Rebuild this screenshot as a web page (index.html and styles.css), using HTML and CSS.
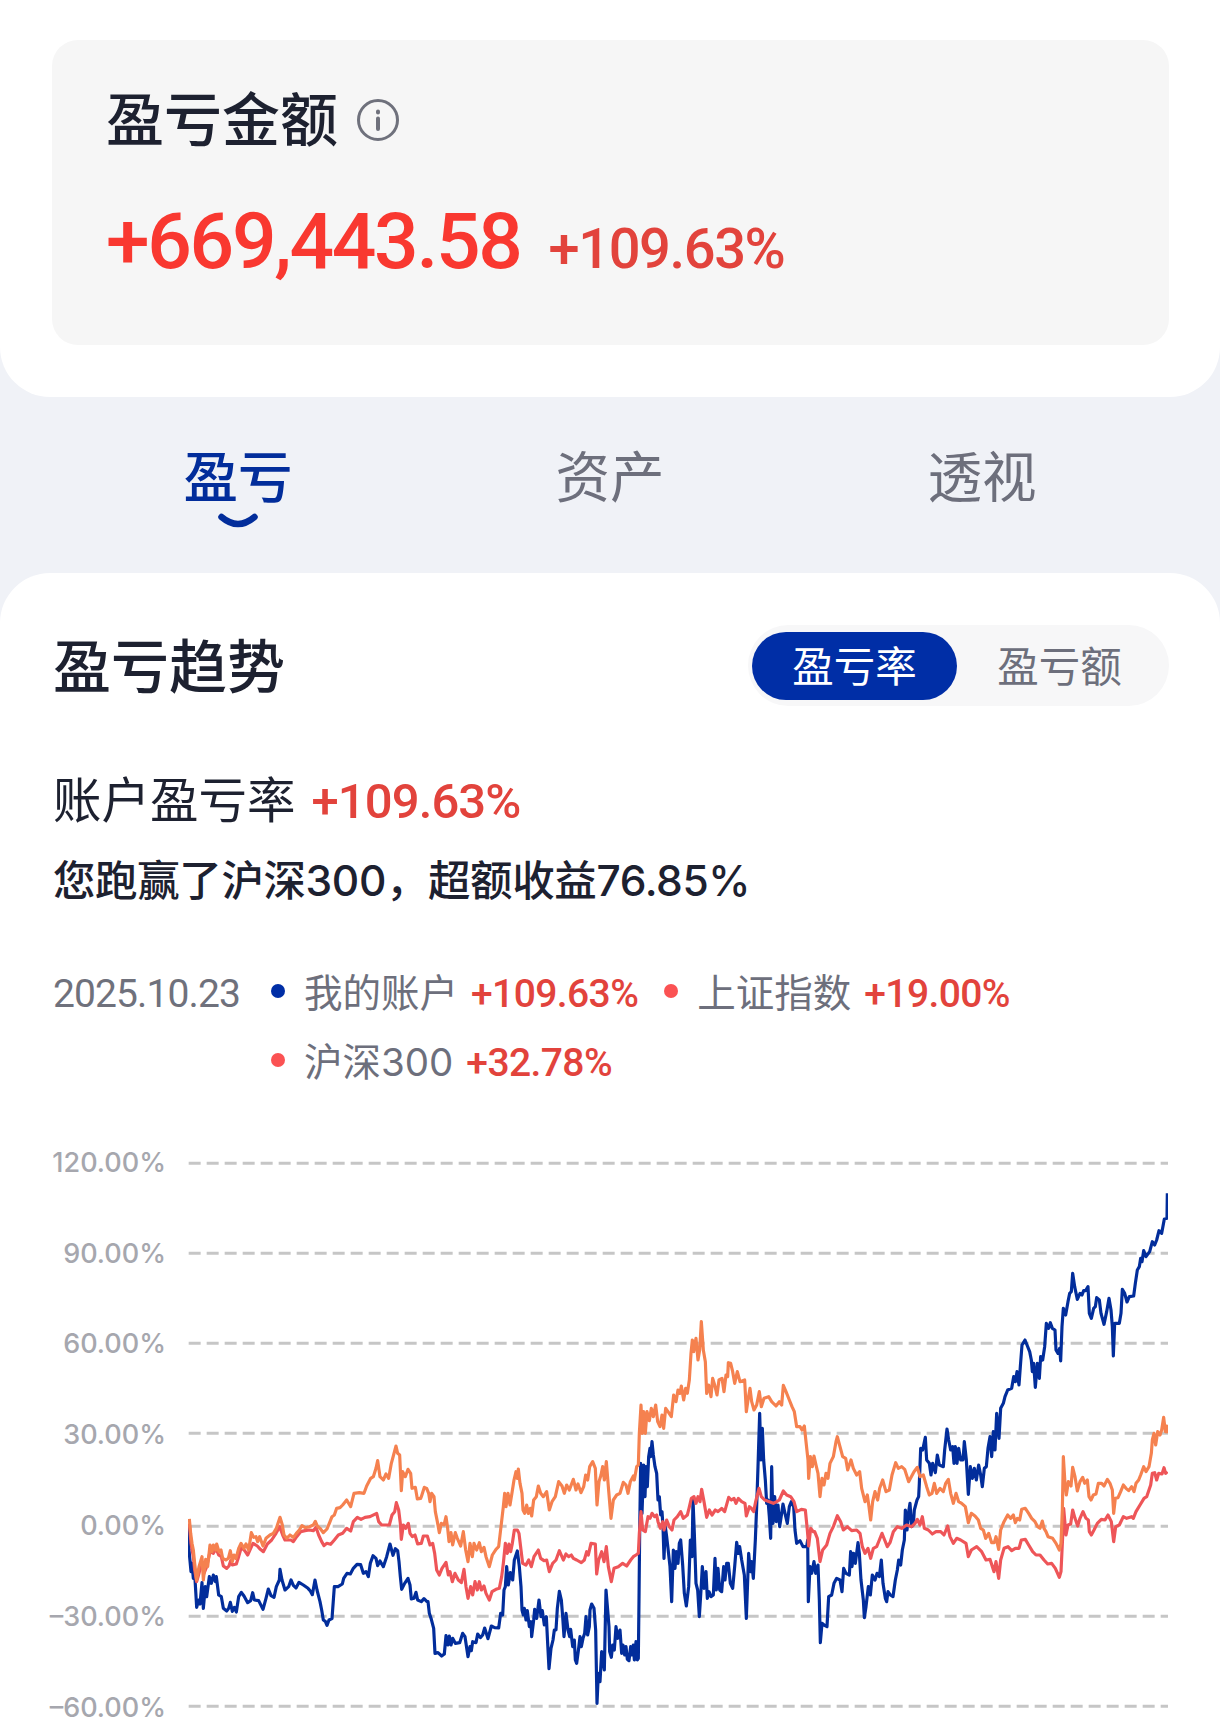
FILE: index.html
```html
<!DOCTYPE html>
<html lang="zh-CN">

<head>
	<meta charset="UTF-8">
	<meta name="viewport" content="width=device-width, initial-scale=1.0">
	<title>盈亏</title>
	<link rel="stylesheet" href="styles.css">
</head>

<body>
	<section class="summary">
		<div class="card">
			<div class="cardTitle">
				<h1>盈亏金额</h1>
				<svg class="info" viewBox="0 0 42 42">
					<circle cx="21" cy="21" r="19.5" />
					<path d="M21 19.5V30M21 12.5V13.5" />
				</svg>
			</div>
			<div class="cardMoney">
				<span class="num amount">+669,443.58</span>
				<span class="num percent">+109.63%</span>
			</div>
		</div>
	</section>

	<nav class="tabs">
		<a class="tab active">盈亏
			<svg class="smile" viewBox="0 0 40 16">
				<path d="M3.5 4Q20 18 36.5 4" />
			</svg>
		</a>
		<a class="tab">资产</a>
		<a class="tab">透视</a>
	</nav>

	<section class="trend">
		<div class="trendHead">
			<h2>盈亏趋势</h2>
			<div class="switch">
				<button class="on">盈亏率</button>
				<button>盈亏额</button>
			</div>
		</div>

		<p class="rate"><span class="rateName">账户盈亏率</span><span class="num rateValue">+109.63%</span></p>
		<p class="beat">您跑赢了沪深300，超额收益76.85%</p>

		<div class="legend">
			<span class="num date">2025.10.23</span>
			<div class="items">
				<div class="item"><i class="dot blue"></i><span class="name">我的账户</span><span class="num value">+109.63%</span></div>
				<div class="item"><i class="dot"></i><span class="name">上证指数</span><span class="num value">+19.00%</span></div>
				<div class="item"><i class="dot"></i><span class="name">沪深300</span><span class="num value">+32.78%</span></div>
			</div>
		</div>

		<div class="chart">
			<div class="axis">
				<span>120.00%</span>
				<span>90.00%</span>
				<span>60.00%</span>
				<span>30.00%</span>
				<span>0.00%</span>
				<span>–30.00%</span>
				<span>–60.00%</span>
			</div>
			<svg class="plot" viewBox="24 -852 2940 1818">
				<path class="grid" d="M26 -710H2964M26 -440H2964M26 -170H2964M26 100H2964M26 379H2964M26 649H2964M26 919H2964" />
				<path class="line account" id="account" />
				<path class="line shanghai" id="shanghai" />
				<path class="line hs300" id="hs300" />
			</svg>
		</div>
	</section>

	<script src="chart.js"></script>
</body>

</html>
```
FILE: styles.css
```css
* {
	box-sizing: border-box;
}

body {
	margin: 0;
	height: 1722px;
	overflow: hidden;
	background: #f0f2f7;
	color: #1d2130;
	font-family: "Noto Sans CJK SC", sans-serif;
}

h1,
h2,
p {
	margin: 0;
	font-weight: 500;
}

.num {
	font-family: Roboto, sans-serif;
	font-weight: 500;
	color: #e2433c;
	white-space: nowrap;
}

.summary {
	height: 397px;
	padding: 40px 51px 0 52px;
	background: #fff;
	border-radius: 0 0 50px 50px;
}

.card {
	height: 305px;
	padding: 41px 54px 0;
	background: #f6f6f6;
	border-radius: 26px;
}

.cardTitle {
	display: flex;
	align-items: center;
	gap: 19px;
	height: 70px;
}

.cardTitle h1 {
	font-size: 58px;
	line-height: 70px;
}

.info {
	width: 42px;
	height: 42px;
	margin-top: 7px;
	fill: none;
	stroke: #6f717c;
	stroke-width: 3;
}

.info path {
	stroke-width: 4;
	stroke-linecap: round;
}

.cardMoney {
	display: flex;
	align-items: baseline;
	gap: 28px;
	margin-top: 44px;
	line-height: 92px;
}

.amount {
	font-size: 78.5px;
	letter-spacing: -2.3px;
	color: #f93830;
}

.percent {
	font-size: 56px;
	letter-spacing: -1.4px;
}

.tabs {
	display: flex;
	height: 176px;
	padding: 0 52px;
}

.tab {
	display: flex;
	flex: 1;
	flex-direction: column;
	align-items: center;
	padding-top: 41px;
	font-size: 54.5px;
	line-height: 71px;
	color: #6d6f7c;
}

.tab.active {
	color: #022d9b;
	font-weight: 500;
}

.smile {
	width: 40px;
	height: 16px;
	margin-top: 4px;
	fill: none;
	stroke: #022d9b;
	stroke-width: 6.5;
	stroke-linecap: round;
}

.trend {
	height: 1149px;
	padding: 52px 51px 0 53px;
	background: #fff;
	border-radius: 50px 50px 0 0;
}

.trendHead {
	display: flex;
	align-items: center;
	justify-content: space-between;
	height: 81px;
}

.trendHead h2 {
	height: 85px;
	font-size: 58px;
	line-height: 81px;
}

.switch {
	display: flex;
	width: 421px;
	height: 81px;
	padding: 7px 4px;
	background: #f7f7f8;
	border-radius: 41px;
}

.switch button {
	width: 205px;
	height: 68px;
	padding: 0 0 4px;
	border: 0;
	border-radius: 34px;
	background: none;
	color: #6d6f7c;
	font-family: inherit;
	font-size: 41.5px;
	line-height: 60px;
}

.switch .on {
	background: #002ea6;
	color: #fff;
}

.rate {
	display: flex;
	align-items: center;
	gap: 16px;
	height: 80px;
	margin-top: 51px;
}

.rateName {
	font-size: 48.5px;
	font-weight: 400;
}

.rateValue {
	padding-top: 8px;
	font-size: 49px;
	letter-spacing: -0.9px;
}

.beat {
	height: 80px;
	margin-top: 4px;
	font-family: Inter, "Noto Sans CJK SC", sans-serif;
	font-size: 42.5px;
	letter-spacing: -0.4px;
	line-height: 80px;
	white-space: nowrap;
}

.legend {
	display: flex;
	margin-top: 37px;
	line-height: 69px;
}

.date {
	width: 218px;
	padding-top: 2px;
	font-size: 39px;
	font-weight: 400;
	letter-spacing: -0.9px;
	color: #6f717c;
}

.items {
	display: flex;
	flex: 1;
	flex-wrap: wrap;
	column-gap: 26px;
}

.item {
	display: flex;
	align-items: center;
	height: 69px;
}

.dot {
	width: 14px;
	height: 14px;
	margin: 0 19px 3px 0;
	border-radius: 50%;
	background: #fb5253;
}

.dot.blue {
	background: #002ea6;
}

.name {
	padding-top: 1px;
	margin-right: 13px;
	font-family: Inter, "Noto Sans CJK SC", sans-serif;
	font-size: 38.5px;
	color: #6d6f7c;
}

.value {
	padding-top: 4px;
	font-size: 39px;
	letter-spacing: -0.6px;
}

.chart {
	display: flex;
	gap: 22px;
	height: 606px;
	margin-top: 20px;
}

.axis {
	width: 113px;
	padding-top: 1px;
	font-family: Inter, sans-serif;
	font-size: 27px;
	font-weight: 500;
	color: #a6a7ae;
}

.axis span {
	display: flex;
	align-items: center;
	justify-content: flex-end;
	height: 90.8px;
	white-space: nowrap;
}

.plot {
	width: 980px;
	height: 606px;
	fill: none;
}

.grid {
	stroke: #c6c6c6;
	stroke-width: 9;
	stroke-dasharray: 36 18;
}

.line {
	stroke-width: 9.5;
	stroke-linejoin: round;
}

.account {
	stroke: #022d9b;
}

.shanghai {
	stroke: #ee5558;
}

.hs300 {
	stroke: #f5814f;
}
```
FILE: chart.js
```js
// each series is a list of chunks, the points of a chunk count from its own x / y
const series = {
	account: [
		{ x: 0, y: 0, points: '26,375 27,450 33,515 36,490 40,535 44,520 50,622 56,600 60,612 66,548 70,625 76,560 80,590 88,530 94,550 100,525 106,545 109,530 116,585 124,590 130,625 140,633 146,625 151,607 157,634 163,622 169,636 176,590 184,577 192,588 203,608 212,602 218,578 223,600 236,602 249,628 258,595 265,567 273,587 282,592 289,560 298,540 300,508 306,540 315,570 326,560 333,540 340,556 348,564 357,547 370,555 384,565 391,573 397,584 405,540 411,570 420,605 425,630 430,660 436,664 441,676 447,660 456,656 463,560 474,560 487,552 491,535 501,520 511,522 520,505 531,493 542,494 550,520 558,515 565,530 571,490 579,467 588,475 593,497 600,483 610,500 620,470 630,432 639,466 646,446 653,452 657,485 661,530 665,568 674,550 684,535 690,555 694,597 702,595 708,577 713,600 724,605 732,596 741,605' },
		{ x: 720, y: 0, points: '24,605 28,640 34,658 41,685 45,760 54,758 65,768 73,762 78,707 84,735 88,708 93,735 98,715 106,730 119,728 128,700 135,710 144,770 150,740 154,752 158,725 168,728 173,702 181,713 188,705 194,684 204,716 214,678 224,683 236,684 242,640 248,645 252,570 256,560 260,500 265,555 271,518 278,540 283,480 292,453 298,500 303,560 306,630 310,645 313,625 318,660 322,632 328,680 333,665 335,710 341,660 344,628 350,655 357,600 363,650 367,632 373,675 379,650 383,730 387,806 393,745 399,720 403,690 408,690 412,625 418,574 424,600 428,650 432,710 438,640 444,690 449,710 452,688 458,740 463,720 466,780 470,790 476,745 480,710 484,740 489,715 494,700 498,650 503,705 508,680 510,630 515,612 522,625 527,690 531,910 535,820 540,845 545,755 553,810 558,570 563,630 567,680 569,755 574,772 578,735 583,750 588,680 593,715 600,690 605,760 609,735 614,765 618,740 622,778 627,782 632,740 636,765 640,735 643,780 648,725 652,780 655,775 657,600 659,400' },
		{ x: 1350, y: -300, points: '32,490 36,640 41,495 45,590 48,500 52,560 56,470 60,445 62,470 66,425 70,465 75,500 80,520 84,600 88,590 92,645 96,635 99,680 102,775 106,680 110,710 114,745 120,800 125,905 130,750 135,805 139,755 144,790 148,730 152,720 158,795 163,880 169,918 176,860 181,720 186,770 189,600 193,700 198,850 203,870 208,950 213,870 217,800 222,865 228,815 232,895 237,875 243,890 250,885 255,775 259,870 264,805 269,870 275,875 281,800 285,840 290,790 295,790 301,850 308,865 314,800 320,727 325,760 329,740 335,780 343,825 349,955 356,760 361,815 365,785 370,835 376,720 380,620 384,500 389,340 393,480 397,385 401,480 406,540 410,610 414,600 418,650 422,715 425,500 429,670 434,590 439,665 444,615 449,680 455,640 459,612 465,640 472,670 478,620 484,605 491,620 495,690 500,730 510,722 519,740 530,740 533,720 535,905 540,800 545,820 552,785 557,820 564,795 568,900' },
		{ x: 1890, y: -120, points: '31,848 36,790 42,795 51,800 56,710 65,705 72,670 80,655 90,660 96,695 101,625 108,640 118,645 122,575 126,620 131,580 136,610 144,548 148,580 153,660 160,720 163,773 168,740 175,680 181,705 187,645 195,660 201,640 208,650 214,600 219,670 226,715 230,725 234,695 241,705 249,710 256,660 262,630 266,600 272,615 277,570 283,540 286,450 291,510 296,455 300,430 305,500 310,495 313,450 321,420 326,410 328,370 332,265 338,270 346,232 350,300 358,310 363,345 368,310 376,338 382,285 388,315 400,320 404,270 411,207 416,240 422,270 428,260 432,310 436,260 441,310 446,265 452,300 459,300 463,245 469,300 475,403 481,320 487,355 493,325 499,360 506,315 512,345 517,380 523,325 529,320 534,265 540,230 545,290 550,215 555,270 560,160 567,235' },
		{ x: 2400, y: -690, points: '62,715 70,700 75,680 83,660 95,655 101,620 106,635 111,605 117,645 121,590 126,525 135,510 141,525 149,545 154,570 157,605 161,580 166,652 172,580 178,625 182,560 188,570 194,530 199,460 206,475 211,458 217,475 225,480 228,540 234,550 239,535 242,573 246,470 250,415 257,435 264,395 269,370 274,365 278,310 284,350 292,388 300,370 306,375 311,362 317,362 324,350 328,430 334,445 341,415 346,410 350,383 358,390 363,430 372,463 380,425 387,385 393,420 397,470 400,558 404,460 411,460 418,460 423,430 427,358 434,370 441,396 448,380 461,378 466,340 472,300 478,290 482,265 486,275 491,242 498,260 509,245 517,215 524,225 530,210 537,182 545,190 553,147 561,145 562,70' }
	],
	shanghai: [
		{ x: 0, y: 0, points: '28,370 33,430 40,470 44,510 50,545 57,520 66,485 72,520 80,500 90,455 100,460 108,445 116,465 124,470 130,498 140,505 147,498 152,482 157,495 169,492 176,470 184,442 194,452 203,465 212,445 219,430 232,438 241,448 250,455 262,432 275,420 288,400 299,380 308,405 315,420 325,420 333,420 340,425 350,410 362,395 375,392 388,390 400,392 408,382 416,405 425,425 432,437 440,430 452,433 463,420 475,405 488,400 500,385 512,393 520,365 532,352 543,358 555,352 570,350 590,340 596,365 605,375 628,375 636,345 644,335 649,308 656,330 661,370 664,418 670,375 677,385 685,370 690,400 697,410 705,405 713,432 722,430' },
		{ x: 720, y: 0, points: '4,430 10,408 22,408 30,435 38,430 44,460 50,510 58,525 66,505 78,487 85,525 90,515 97,545 105,520 115,540 124,548 132,508 138,560 144,595 152,560 158,585 165,545 172,570 178,545 184,570 192,558 198,580 208,600 216,575 228,568 238,565 245,530 250,490 256,430 262,460 267,432 272,455 277,430 283,390 292,390 297,400 303,450 308,490 318,495 326,480 334,500 342,470 355,450 362,475 372,482 380,480 388,515 398,490 408,480 418,452 430,480 438,462 446,470 454,465 460,475 470,480 484,488 493,480 500,455 505,465 513,430 526,432 530,522 536,480 545,455 552,485 559,440 565,500 574,545 582,505 595,500 608,490 620,498 632,480 640,470 648,465 655,460 658,400' },
		{ x: 1350, y: -300, points: '33,635 38,690 46,695 54,650 60,655 66,640 74,650 80,645 84,665 91,685 98,665 102,690 110,660 118,680 126,690 132,660 142,650 152,635 160,655 172,645 177,625 184,595 192,590 198,610 204,590 210,605 215,568 222,605 230,652 238,630 246,645 256,630 264,635 275,625 284,635 296,592 304,600 312,595 318,610 325,595 335,605 345,610 349,648 358,620 364,625 371,635 377,605 387,565 394,590 404,600 418,605 430,610 440,605 448,600 460,573 470,585 482,590 492,605 500,635 514,628 526,630 532,690 536,738 542,685 550,695' },
		{ x: 1890, y: -120, points: '14,515 22,535 30,605 38,570 50,555 60,520 70,500 82,467 92,485 100,510 112,500 125,512 140,510 150,520 157,560 165,580 174,565 182,595 190,565 200,560 208,540 216,520 224,540 232,560 240,548 250,515 262,500 275,505 290,495 305,500 315,490 322,478 330,495 337,470 343,505 355,510 367,522 378,515 392,515 402,525 413,498 420,530 430,550 440,535 452,540 468,550 475,590 484,570 500,560 515,575 528,600 540,598 552,635 558,605 566,655' },
		{ x: 2400, y: -690, points: '62,1170 72,1135 84,1130 95,1142 106,1135 117,1135 124,1110 136,1108 146,1125 158,1145 168,1155 180,1155 192,1170 203,1182 215,1180 226,1195 238,1222 243,1205 248,1100 251,1015 258,1095 264,1065 272,1062 278,1020 285,1045 293,1068 300,1045 309,1025 318,1045 325,1050 328,1085 334,1095 342,1080 352,1060 364,1048 375,1050 384,1035 394,1055 401,1115 407,1070 418,1065 430,1040 440,1045 455,1040 460,1045 468,1025 480,1005 492,985 500,980 512,945 517,910 524,908 530,930 536,910 546,912 552,893 557,910 562,905' }
	],
	hs300: [
		{ x: 0, y: 0, points: '28,357 32,400 36,430 40,450 44,490 50,540 57,500 66,470 70,540 77,478 83,500 90,435 96,455 100,435 107,450 110,432 117,455 123,450 128,475 138,480 145,475 151,452 157,485 162,465 168,475 176,445 183,430 192,445 198,432 206,450 214,398 221,412 228,410 233,425 239,410 249,438 258,415 270,405 280,400 289,385 300,352 307,375 312,405 320,415 330,405 340,412 349,400 358,390 366,377 376,383 388,380 400,375 406,364 412,378 420,385 430,398 441,387 448,370 456,350 463,345 470,325 480,323 488,315 500,300 512,320 522,280 538,278 552,280 560,258 572,235 580,230 588,205 593,182 600,230 610,240 618,222 626,235 634,190 648,138 653,160 659,165 664,272 668,215 676,230 684,208 692,220 696,265 706,262 712,297 722,295' },
		{ x: 720, y: 0, points: '4,290 13,262 20,265 26,280 30,305 35,280 42,290 46,335 52,365 58,398 64,370 72,375 78,350 83,385 87,425 93,398 98,435 106,398 112,415 122,438 130,395 137,450 144,485 150,430 157,470 162,430 170,450 178,428 184,455 192,442 198,470 208,500 217,465 228,448 236,440 243,380 250,320 254,280 258,320 264,280 270,315 276,278 282,240 288,215 292,235 295,207 300,250 306,280 309,330 314,340 320,315 325,340 331,325 335,348 341,300 349,290 355,258 362,280 370,290 380,275 388,330 396,305 406,290 416,245 426,258 433,280 440,255 448,270 460,238 468,270 474,252 483,278 491,260 497,225 503,240 509,200 518,185 526,205 531,315 537,245 543,225 548,200 553,240 559,185 565,260 573,355 580,300 590,285 600,280 610,247 618,255 624,280 631,245 640,228 643,240 650,200 655,195 658,100' },
		{ x: 1350, y: -300, points: '33,315 37,400 41,335 46,400 51,335 58,362 64,325 70,350 77,315 83,365 90,380 96,345 101,385 107,325 114,335 124,350 131,285 138,305 144,270 150,280 154,258 161,300 167,265 172,280 178,240 183,160 187,120 191,155 198,115 204,180 209,150 214,65 220,150 226,185 230,280 236,255 243,290 248,235 254,255 261,285 267,240 276,235 282,275 288,225 293,230 295,188 302,190 308,215 314,250 322,215 330,245 344,240 349,335 354,300 360,265 365,305 372,330 380,315 388,275 394,320 402,295 416,290 425,305 438,318 448,305 455,315 460,256 468,275 478,300 486,320 493,335 500,380 510,380 516,390 523,378 528,425 534,480 536,535 541,470 547,500' },
		{ x: 1890, y: -120, points: '12,288 18,315 24,340 30,410 36,355 42,375 48,340 54,355 60,310 70,290 78,245 82,230 90,260 98,290 107,295 113,330 123,300 130,325 140,345 149,335 155,385 165,425 172,405 177,440 182,480 188,425 195,395 203,420 209,385 218,360 228,395 238,390 246,345 257,308 265,325 275,320 284,328 296,365 304,350 312,335 322,322 330,350 340,345 350,380 358,405 366,400 373,370 380,400 390,385 400,395 407,370 415,358 422,400 430,430 438,400 446,425 455,430 466,440 475,488 484,460 495,468 505,480 512,505 520,510 527,535 536,520 545,548 553,548 558,530 566,568' },
		{ x: 2400, y: -690, points: '62,1080 72,1055 83,1035 92,1045 100,1035 106,1058 112,1045 119,1050 125,1018 136,1015 146,1030 155,1045 165,1055 173,1070 180,1075 187,1053 192,1075 198,1085 204,1100 218,1105 228,1120 238,1140 243,1120 247,1020 250,860 255,940 259,975 265,935 273,948 278,892 285,920 292,963 300,935 308,922 314,940 322,930 327,980 333,990 340,975 348,972 355,940 365,940 372,948 382,928 390,940 397,960 401,1030 406,985 414,983 422,965 430,945 438,955 446,962 455,950 462,965 468,940 476,930 482,915 491,890 498,905 507,890 514,850 517,810 522,790 527,825 533,785 540,795 545,780 551,742 556,785 560,768 562,790' }
	]
};

function getPath(chunks) {
	return 'M' + chunks.map(chunk => chunk.points.split(' ').map(point => {
		const [x, y] = point.split(',').map(Number);
		return `${x + chunk.x} ${y + chunk.y}`;
	}).join('L')).join('L');
}

Object.keys(series).forEach(name => {
	document.querySelector(`#${name}`).setAttribute('d', getPath(series[name]));
});
```
